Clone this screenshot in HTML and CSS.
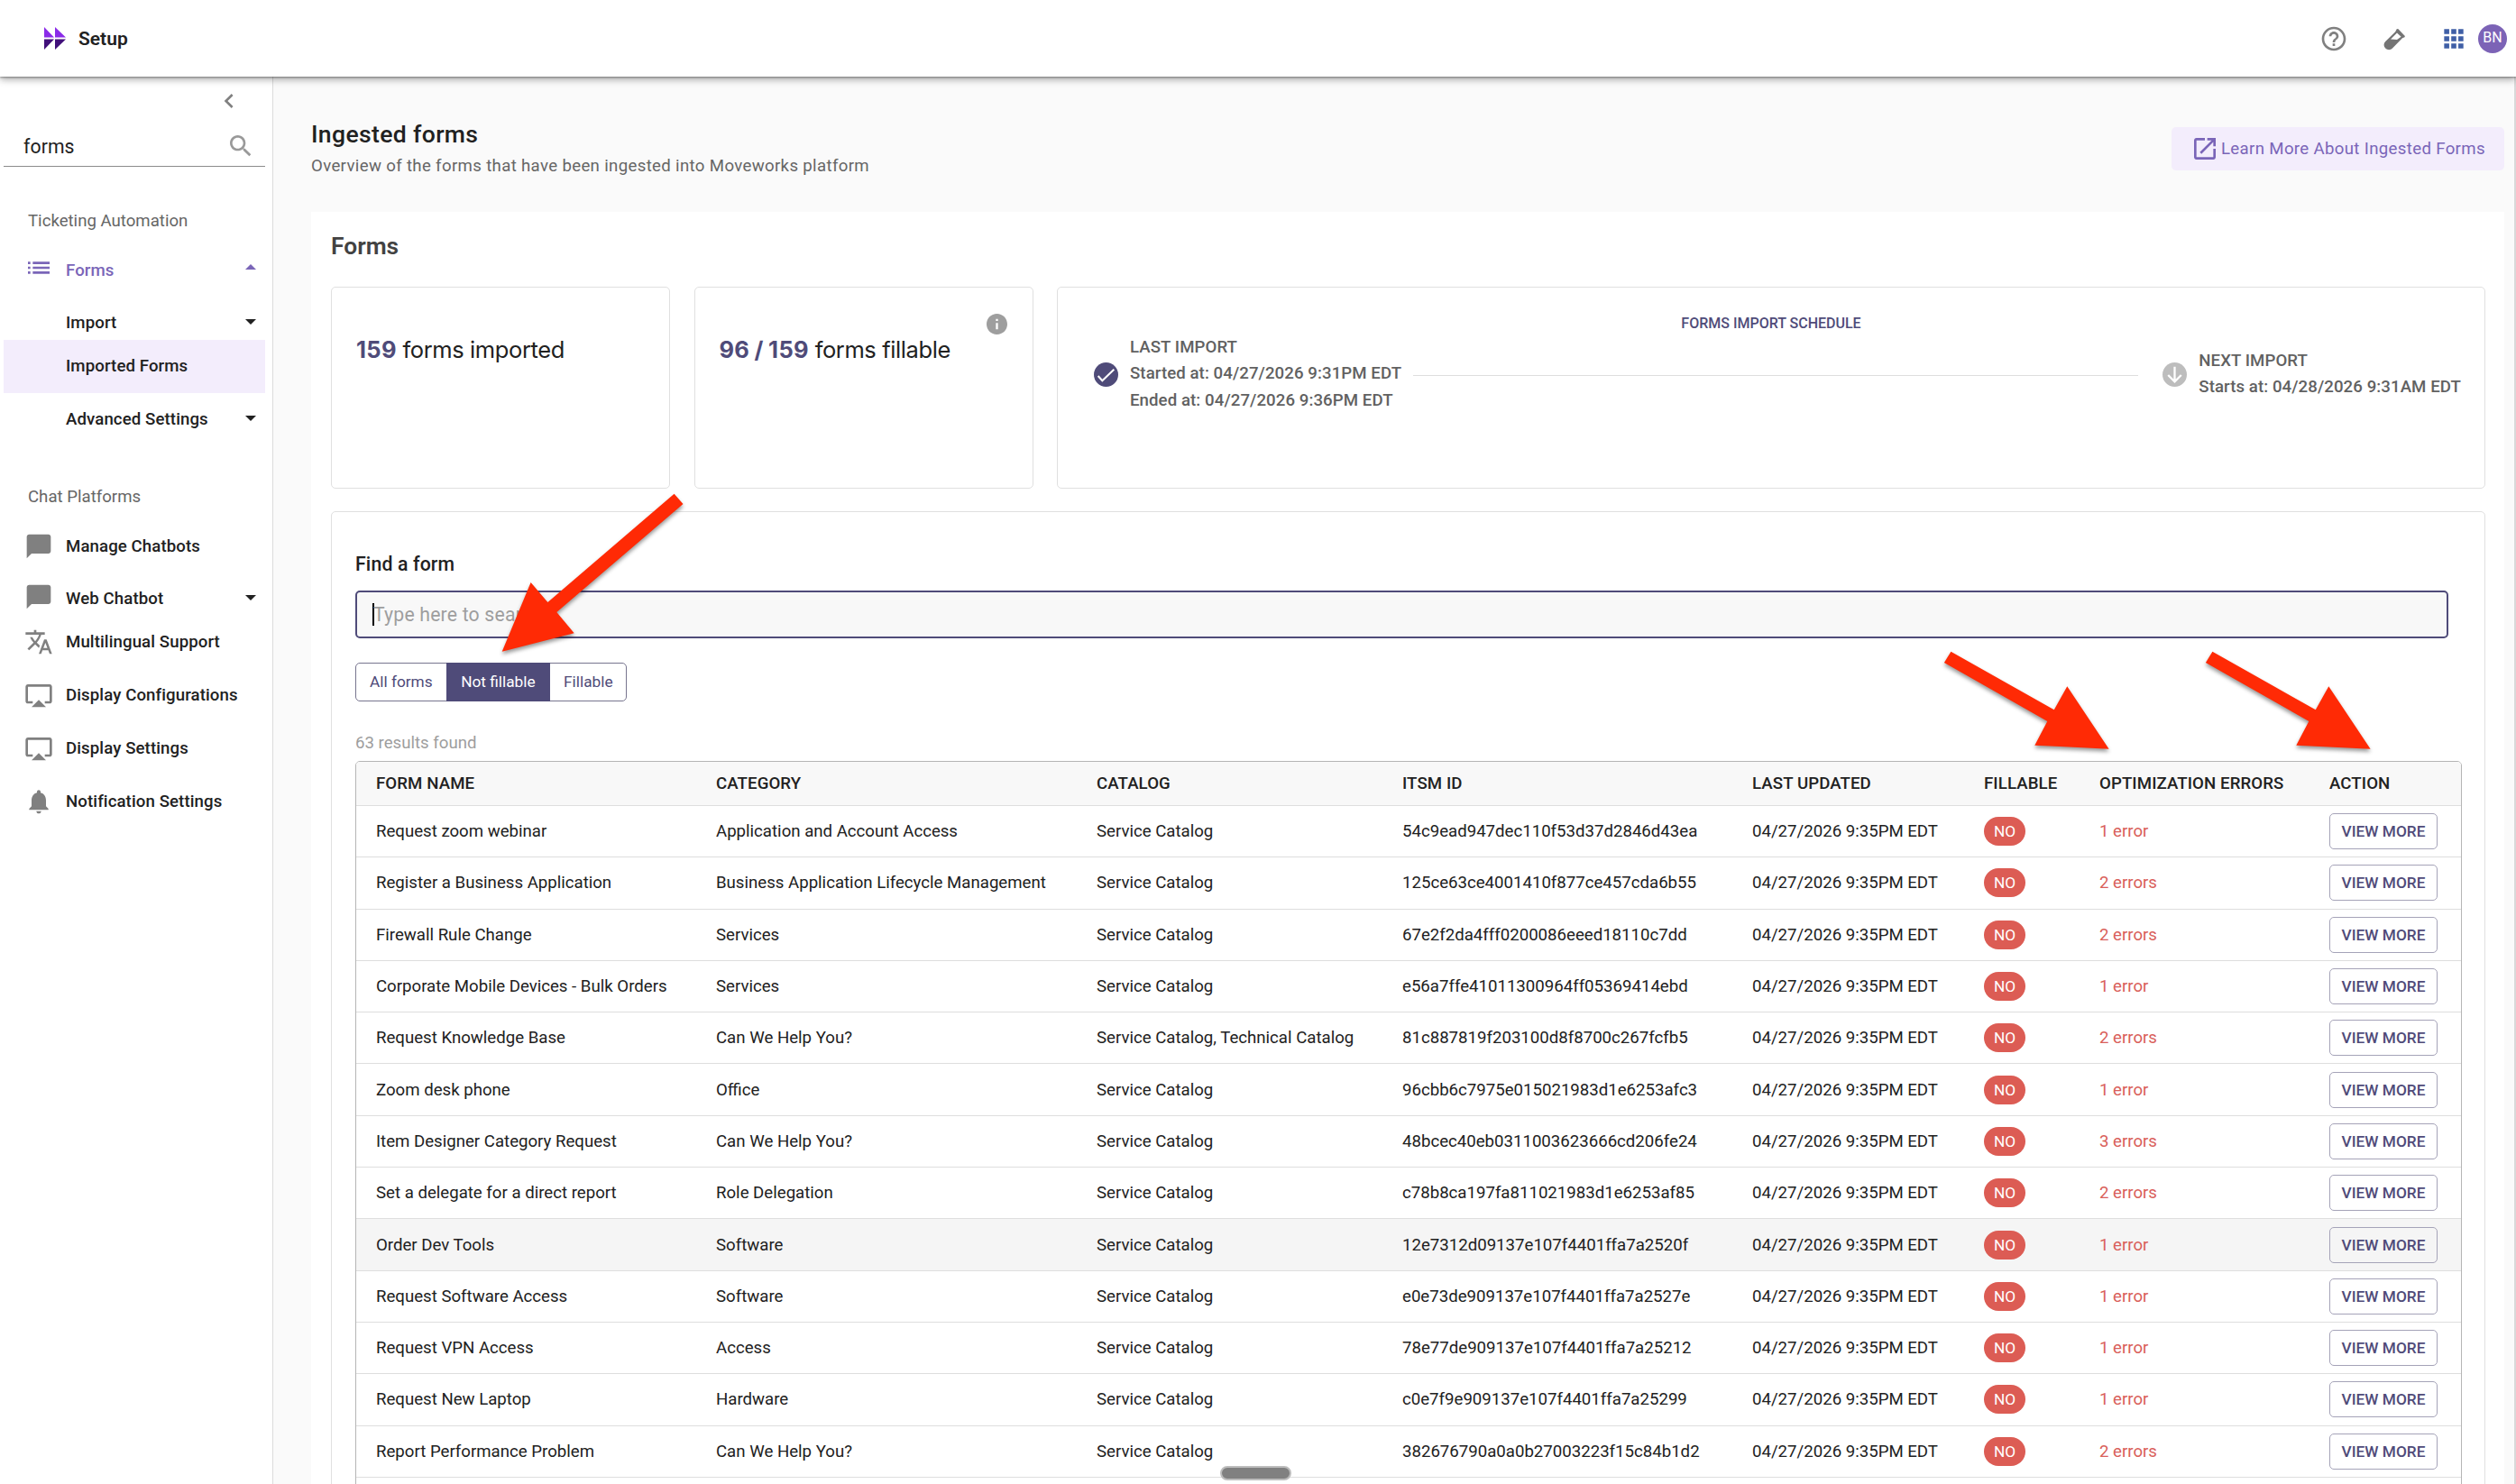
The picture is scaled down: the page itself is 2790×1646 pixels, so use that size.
FILE: index.html
```
<!DOCTYPE html>
<html lang="en">

<head>
    <meta charset="UTF-8">
    <meta name="viewport" content="width=device-width, initial-scale=1.0">
    <title>Setup - Ingested forms</title>
    <link rel="stylesheet" href="styles.css">
</head>

<body>
    <header class="topbar">
        <div class="brand">
            <svg class="logo" viewBox="0 0 24 25">
                <path fill="#8a2be8" d="M0 0l11 11.5H0zM12 0l12 11.5H12z" />
                <path fill="#41107a" d="M0 13.5h11L0 25zM12 13.5h12L12 25z" />
            </svg>
            <span>Setup</span>
        </div>
        <div class="top_icons">
            <svg class="icon help" viewBox="0 0 24 24"><path d="M11 18h2v-2h-2v2zm1-16C6.480 2 2 6.480 2 12s4.480 10 10 10 10-4.480 10-10S17.520 2 12 2zm0 18c-4.410 0-8-3.590-8-8s3.590-8 8-8 8 3.590 8 8-3.590 8-8 8zm0-14c-2.210 0-4 1.790-4 4h2c0-1.100.9-2 2-2s2 .9 2 2c0 2-3 1.750-3 5h2c0-2.250 3-2.500 3-5 0-2.210-1.790-4-4-4z" /></svg>
            <svg class="flask" viewBox="0 0 24 24"><path fill-rule="evenodd" d="M14.700.3L16.200 0l7.700 8-.4 1.300-2.500.9L10 21.600c-2.200 2.200-5.600 2.200-7.800 0s-2.200-5.600 0-7.700L13.200 3.200zM15 4.400l-7 7.200 7 .4 4.600-3.200z" /></svg>
            <svg class="icon apps" viewBox="0 0 24 24"><path d="M4 8h4.200V4H4zM9.900 8h4.200V4H9.900zM15.800 8H20V4h-4.200zM4 14h4.200v-4H4zM9.900 14h4.200v-4H9.900zM15.800 14H20v-4h-4.200zM4 20h4.200v-4H4zM9.900 20h4.200v-4H9.900zM15.800 20H20v-4h-4.200z" /></svg>
            <div class="avatar">BN</div>
        </div>
    </header>

    <div class="layout">
        <nav class="sidebar">
            <div class="collapse">
                <svg class="icon" viewBox="0 0 24 24"><path d="M15.410 7.410L14 6l-6 6 6 6 1.410-1.410L10.830 12z" /></svg>
            </div>
            <div class="side_search">
                <span>forms</span>
                <svg class="icon" viewBox="0 0 24 24"><path d="M15.500 14h-.79l-.28-.27C15.410 12.590 16 11.110 16 9.500 16 5.910 13.090 3 9.500 3S3 5.910 3 9.500 5.910 16 9.500 16c1.610 0 3.090-.59 4.230-1.570l.27.28v.79l5 4.990L20.490 19l-4.990-5zm-6 0C7.010 14 5 11.990 5 9.500S7.010 5 9.500 5 14 7.010 14 9.500 11.990 14 9.500 14z" /></svg>
            </div>

            <div class="side_label">Ticketing Automation</div>
            <a class="item open">
                <svg class="icon" viewBox="0 0 24 24"><path d="M3 13h2v-2H3v2zm0 4h2v-2H3v2zm0-8h2V7H3v2zm4 4h14v-2H7v2zm0 4h14v-2H7v2zM7 7v2h14V7H7z" /></svg>
                <span>Forms</span>
                <i class="caret up"></i>
            </a>
            <a class="item sub parent"><span>Import</span><i class="caret"></i></a>
            <a class="item sub active"><span>Imported Forms</span></a>
            <a class="item sub"><span>Advanced Settings</span><i class="caret"></i></a>

            <div class="side_label chat">Chat Platforms</div>
            <a class="item">
                <svg class="icon" viewBox="0 0 24 24"><path d="M20 2H4c-1.100 0-2 .9-2 2v18l4-4h14c1.100 0 2-.9 2-2V4c0-1.100-.9-2-2-2z" /></svg>
                <span>Manage Chatbots</span>
            </a>
            <a class="item parent">
                <svg class="icon" viewBox="0 0 24 24"><path d="M20 2H4c-1.100 0-2 .9-2 2v18l4-4h14c1.100 0 2-.9 2-2V4c0-1.100-.9-2-2-2z" /></svg>
                <span>Web Chatbot</span>
                <i class="caret"></i>
            </a>
            <a class="item">
                <svg class="icon" viewBox="0 0 24 24"><path d="M12.870 15.070l-2.540-2.510.03-.03c1.740-1.940 2.980-4.170 3.710-6.530H17V4h-7V2H8v2H1v1.990h11.170C11.500 7.920 10.440 9.750 9 11.350 8.070 10.320 7.300 9.190 6.690 8h-2c.73 1.630 1.730 3.170 2.980 4.560l-5.090 5.020L4 19l5-5 3.110 3.110.76-2.040zM18.500 10h-2L12 22h2l1.120-3h4.750L21 22h2l-4.500-12zm-2.620 7l1.620-4.330L19.120 17h-3.240z" /></svg>
                <span>Multilingual Support</span>
            </a>
            <a class="item">
                <svg class="icon" viewBox="0 0 24 24"><path d="M6 22h12l-6-6zM21 3H3c-1.100 0-2 .9-2 2v12c0 1.100.9 2 2 2h4v-2H3V5h18v12h-4v2h4c1.100 0 2-.9 2-2V5c0-1.100-.9-2-2-2z" /></svg>
                <span>Display Configurations</span>
            </a>
            <a class="item">
                <svg class="icon" viewBox="0 0 24 24"><path d="M6 22h12l-6-6zM21 3H3c-1.100 0-2 .9-2 2v12c0 1.100.9 2 2 2h4v-2H3V5h18v12h-4v2h4c1.100 0 2-.9 2-2V5c0-1.100-.9-2-2-2z" /></svg>
                <span>Display Settings</span>
            </a>
            <a class="item">
                <svg class="icon" viewBox="0 0 24 24"><path d="M12 22c1.100 0 2-.9 2-2h-4c0 1.100.89 2 2 2zm6-6v-5c0-3.070-1.640-5.640-4.500-6.320V4c0-.83-.67-1.500-1.500-1.500s-1.500.67-1.500 1.500v.68C7.630 5.360 6 7.920 6 11v5l-2 2v1h16v-1l-2-2z" /></svg>
                <span>Notification Settings</span>
            </a>
        </nav>

        <main class="content">
            <div class="page_head">
                <div>
                    <h1>Ingested forms</h1>
                    <p>Overview of the forms that have been ingested into Moveworks platform</p>
                </div>
                <a class="learn_btn">
                    <svg class="icon" viewBox="0 0 24 24"><path d="M19 19H5V5h7V3H5c-1.110 0-2 .9-2 2v14c0 1.100.89 2 2 2h14c1.100 0 2-.9 2-2v-7h-2v7zM14 3v2h3.590l-9.830 9.830 1.410 1.410L19 6.410V10h2V3h-7z" /></svg>
                    <span>Learn More About Ingested Forms</span>
                </a>
            </div>

            <section class="panel">
                <h2>Forms</h2>
                <div class="cards">
                    <div class="card stat"><b>159</b> forms imported</div>
                    <div class="card stat"><b>96 / 159</b> forms fillable
                        <svg class="info" viewBox="2 2 20 20"><path d="M12 2C6.480 2 2 6.480 2 12s4.480 10 10 10 10-4.480 10-10S17.520 2 12 2zm1 15h-2v-6h2v6zm0-8h-2V7h2v2z" /></svg>
                    </div>
                    <div class="card schedule">
                        <div class="schedule_title">FORMS IMPORT SCHEDULE</div>
                        <div class="steps">
                            <svg class="step_icon" viewBox="0 0 26 26"><circle cx="13" cy="13" r="13" fill="#4f4b79" /><path d="M4.500 14.500l4.500 5L21.500 7.500" fill="none" stroke="#fff" stroke-width="2" /></svg>
                            <div class="step_text">
                                <p>LAST IMPORT</p>
                                <p>Started at: 04/27/2026 9:31PM EDT</p>
                                <p>Ended at: 04/27/2026 9:36PM EDT</p>
                            </div>
                            <div class="line"></div>
                            <svg class="step_icon" viewBox="0 0 26 26"><circle cx="13" cy="13" r="13" fill="#bdbdbd" /><path d="M13 4.500v16M6 13.500l7 7 7-7" fill="none" stroke="#fff" stroke-width="2.200" /></svg>
                            <div class="step_text">
                                <p>NEXT IMPORT</p>
                                <p>Starts at: 04/28/2026 9:31AM EDT</p>
                            </div>
                        </div>
                    </div>
                </div>

                <div class="card finder">
                    <h3>Find a form</h3>
                    <div class="search_box"><i class="cursor"></i><span>Type here to search</span></div>
                    <div class="tabs">
                        <span>All forms</span>
                        <span class="on">Not fillable</span>
                        <span>Fillable</span>
                    </div>
                    <div class="count">63 results found</div>

                    <div class="table_wrap">
                        <table>
                            <colgroup>
                                <col class="c_name"><col class="c_cat"><col class="c_catalog"><col class="c_id">
                                <col class="c_date"><col class="c_fill"><col class="c_err"><col class="c_act">
                            </colgroup>
                            <thead>
                                <tr><th>FORM NAME</th><th>CATEGORY</th><th>CATALOG</th><th>ITSM ID</th><th>LAST UPDATED</th><th>FILLABLE</th><th>OPTIMIZATION ERRORS</th><th>ACTION</th></tr>
                            </thead>
                            <tbody>
                                <tr><td>Request zoom webinar</td><td>Application and Account Access</td><td>Service Catalog</td><td>54c9ead947dec110f53d37d2846d43ea</td><td>04/27/2026 9:35PM EDT</td><td><span class="no">NO</span></td><td class="err">1 error</td><td><a class="more">VIEW MORE</a></td></tr>
                                <tr><td>Register a Business Application</td><td>Business Application Lifecycle Management</td><td>Service Catalog</td><td>125ce63ce4001410f877ce457cda6b55</td><td>04/27/2026 9:35PM EDT</td><td><span class="no">NO</span></td><td class="err">2 errors</td><td><a class="more">VIEW MORE</a></td></tr>
                                <tr><td>Firewall Rule Change</td><td>Services</td><td>Service Catalog</td><td>67e2f2da4fff0200086eeed18110c7dd</td><td>04/27/2026 9:35PM EDT</td><td><span class="no">NO</span></td><td class="err">2 errors</td><td><a class="more">VIEW MORE</a></td></tr>
                                <tr><td>Corporate Mobile Devices - Bulk Orders</td><td>Services</td><td>Service Catalog</td><td>e56a7ffe41011300964ff05369414ebd</td><td>04/27/2026 9:35PM EDT</td><td><span class="no">NO</span></td><td class="err">1 error</td><td><a class="more">VIEW MORE</a></td></tr>
                                <tr><td>Request Knowledge Base</td><td>Can We Help You?</td><td>Service Catalog, Technical Catalog</td><td>81c887819f203100d8f8700c267fcfb5</td><td>04/27/2026 9:35PM EDT</td><td><span class="no">NO</span></td><td class="err">2 errors</td><td><a class="more">VIEW MORE</a></td></tr>
                                <tr><td>Zoom desk phone</td><td>Office</td><td>Service Catalog</td><td>96cbb6c7975e015021983d1e6253afc3</td><td>04/27/2026 9:35PM EDT</td><td><span class="no">NO</span></td><td class="err">1 error</td><td><a class="more">VIEW MORE</a></td></tr>
                                <tr><td>Item Designer Category Request</td><td>Can We Help You?</td><td>Service Catalog</td><td>48bcec40eb0311003623666cd206fe24</td><td>04/27/2026 9:35PM EDT</td><td><span class="no">NO</span></td><td class="err">3 errors</td><td><a class="more">VIEW MORE</a></td></tr>
                                <tr><td>Set a delegate for a direct report</td><td>Role Delegation</td><td>Service Catalog</td><td>c78b8ca197fa811021983d1e6253af85</td><td>04/27/2026 9:35PM EDT</td><td><span class="no">NO</span></td><td class="err">2 errors</td><td><a class="more">VIEW MORE</a></td></tr>
                                <tr class="hover"><td>Order Dev Tools</td><td>Software</td><td>Service Catalog</td><td>12e7312d09137e107f4401ffa7a2520f</td><td>04/27/2026 9:35PM EDT</td><td><span class="no">NO</span></td><td class="err">1 error</td><td><a class="more">VIEW MORE</a></td></tr>
                                <tr><td>Request Software Access</td><td>Software</td><td>Service Catalog</td><td>e0e73de909137e107f4401ffa7a2527e</td><td>04/27/2026 9:35PM EDT</td><td><span class="no">NO</span></td><td class="err">1 error</td><td><a class="more">VIEW MORE</a></td></tr>
                                <tr><td>Request VPN Access</td><td>Access</td><td>Service Catalog</td><td>78e77de909137e107f4401ffa7a25212</td><td>04/27/2026 9:35PM EDT</td><td><span class="no">NO</span></td><td class="err">1 error</td><td><a class="more">VIEW MORE</a></td></tr>
                                <tr><td>Request New Laptop</td><td>Hardware</td><td>Service Catalog</td><td>c0e7f9e909137e107f4401ffa7a25299</td><td>04/27/2026 9:35PM EDT</td><td><span class="no">NO</span></td><td class="err">1 error</td><td><a class="more">VIEW MORE</a></td></tr>
                                <tr><td>Report Performance Problem</td><td>Can We Help You?</td><td>Service Catalog</td><td>382676790a0a0b27003223f15c84b1d2</td><td>04/27/2026 9:35PM EDT</td><td><span class="no">NO</span></td><td class="err">2 errors</td><td><a class="more">VIEW MORE</a></td></tr>
                            </tbody>
                        </table>
                    </div>
                </div>
            </section>
        </main>
    </div>

    <div class="scroll_thumb"></div>

    <!-- callout arrows -->
    <svg class="arrows" viewBox="0 0 2790 1646">
        <path d="M747.600 547.700L757.500 559 617.300 679 636.700 702.300 556.700 722.700 588.600 646 607.400 668z" />
        <path d="M2163.400 722.700L2277.800 787.300 2292.300 761.300 2338.600 830.700 2256.300 826.700 2270.300 800 2155.900 735z" />
        <path d="M2453.400 722.700L2567.800 787.300 2582.300 761.300 2628.600 830.700 2546.300 826.700 2560.300 800 2445.900 735z" />
    </svg>
</body>

</html>
```

FILE: styles.css
```
* {
    margin: 0;
    padding: 0;
    box-sizing: border-box;
}

body {
    width: 2790px;
    height: 1646px;
    overflow: hidden;
    position: relative;
    background-color: #fafafa;
    font-family: Roboto, "Liberation Sans", sans-serif;
    font-size: 18.64px;
    color: #212121;
}

.icon {
    width: 32px;
    height: 32px;
    flex-shrink: 0;
    fill: #808080;
}

/* top bar */
.topbar {
    position: relative;
    z-index: 2;
    height: 85px;
    padding: 0 10px 0 49px;
    display: flex;
    align-items: center;
    justify-content: space-between;
    background-color: #fff;
    box-shadow: 0 1px 2px rgba(0, 0, 0, 0.35), 0 3px 8px rgba(0, 0, 0, 0.35);
}

.brand {
    display: flex;
    align-items: center;
    gap: 14px;
    font-size: 21px;
    font-weight: 600;
}

.logo {
    width: 24px;
    height: 25px;
}

.top_icons {
    display: flex;
    align-items: center;
}

.top_icons .help {
    margin-right: 39px;
}

.flask {
    width: 24px;
    height: 24px;
    fill: #757575;
    margin: 2px 38px 0 0;
}

.top_icons .apps {
    margin-right: 11px;
    fill: #3f5fa6;
}

.avatar {
    width: 32px;
    height: 32px;
    line-height: 30px;
    border-radius: 50%;
    background-color: #7c63b6;
    color: #fff;
    font-size: 16px;
    text-align: center;
}

.layout {
    display: flex;
    height: 1561px;
}

/* sidebar */
.sidebar {
    width: 303px;
    flex-shrink: 0;
    border-right: 1px solid #dcdcdc;
    background-color: #fff;
    padding: 11px 8px 0 4px;
}

.collapse {
    height: 32px;
    padding-left: 234px;
}

.side_search {
    height: 57px;
    padding: 12px 11px 0 22px;
    display: flex;
    align-items: center;
    justify-content: space-between;
    border-bottom: 1px solid #8c8c8c;
    font-size: 21.2px;
    letter-spacing: 0.1px;
}

.side_search .icon {
    fill: #999;
}

.side_label {
    margin-top: 44px;
    padding-left: 27px;
    height: 41px;
    line-height: 32px;
    color: #666;
}

.side_label.chat {
    margin-top: 41px;
}

.item {
    display: flex;
    align-items: center;
    height: 58.7px;
    padding: 0 10px 0 23px;
    font-weight: 500;
    letter-spacing: 0.1px;
}

.item span {
    flex: 1;
    padding-left: 14px;
}

.item.sub span {
    padding-left: 46px;
}

.item.parent {
    margin-bottom: -10.5px;
}

.item.parent .icon,
.item.open .icon {
    margin-bottom: 5px;
}

.item.open {
    color: #7a65b8;
}

.item.open span {
    padding-top: 1px;
}

.item.open .icon {
    fill: #7a65b8;
}

.item.active {
    background-color: #f3edfc;
}

.caret {
    border: 6.7px solid transparent;
    border-top-color: #212121;
    border-bottom: 0;
    margin-bottom: 2px;
}

.caret.up {
    border: 6.7px solid transparent;
    border-bottom-color: #7a65b8;
    border-top: 0;
    margin-bottom: 6px;
}

/* main area */
.content {
    flex: 1;
    height: 1561px;
    overflow: hidden;
    padding: 46px 11px 0 42px;
    border-right: 2px solid #d9d9d9;
}

.page_head {
    display: flex;
    justify-content: space-between;
    height: 104px;
}

.page_head h1 {
    font-size: 26.56px;
    font-weight: 500;
    line-height: 35px;
    letter-spacing: 0.35px;
}

.page_head p {
    line-height: 37px;
    color: #666;
    letter-spacing: 0.34px;
}

.learn_btn {
    display: flex;
    align-items: center;
    margin-top: 10px;
    width: 369px;
    height: 48px;
    padding-left: 21px;
    border-radius: 5px;
    background-color: #f3edfc;
    color: #7a65b8;
    letter-spacing: 0.34px;
}

.learn_btn .icon {
    fill: #7a65b8;
    margin-right: 2px;
}

.panel {
    background-color: #fff;
    padding: 18px 21px 0 22px;
    height: 1500px;
}

.panel h2 {
    font-size: 26.4px;
    font-weight: 600;
    line-height: 40px;
    color: #424242;
    height: 65px;
}

.card {
    border: 1px solid #e0e0e0;
    border-radius: 5px;
}

.cards {
    display: flex;
    gap: 26.5px;
    height: 224px;
}

.stat {
    position: relative;
    width: 376px;
    padding: 50px 0 0 27px;
    font-family: Inter, Roboto, sans-serif;
    font-size: 25.5px;
    line-height: 38px;
    letter-spacing: -0.4px;
}

.stat b {
    color: #4f4b79;
    font-weight: 700;
    letter-spacing: 0.3px;
    word-spacing: -1px;
}

.info {
    position: absolute;
    top: 29px;
    right: 28px;
    width: 23px;
    height: 23px;
    fill: #9e9e9e;
}

.schedule {
    flex: 1;
    padding: 30px 26px 0 40px;
}

.schedule_title {
    text-align: center;
    font-size: 16px;
    font-weight: 500;
    line-height: 20px;
    color: #4f4b79;
    padding-right: 14px;
}

.steps {
    display: flex;
    align-items: center;
    height: 92px;
    font-weight: 500;
    color: #616161;
    letter-spacing: 0.08px;
}

.step_icon {
    width: 27px;
    height: 27px;
    margin-right: 13px;
}

.step_text p {
    line-height: 29.5px;
}

.line {
    flex: 1;
    height: 1px;
    background-color: #dedede;
    margin: 2px 27px 0 13px;
}

/* finder */
.finder {
    margin-top: 25px;
    height: 1400px;
    padding: 41px 25px 0 26px;
}

.finder h3 {
    font-size: 21.25px;
    font-weight: 500;
    line-height: 33px;
    height: 46px;
    letter-spacing: 0.15px;
}

.search_box {
    display: flex;
    align-items: center;
    width: 2321px;
    height: 53px;
    padding-left: 17px;
    border: 2px solid #4f4b79;
    border-radius: 5px;
    background-color: #f8f8f8;
    color: #9e9e9e;
    font-size: 21.2px;
    letter-spacing: 0.2px;
}

.search_box span {
    margin-left: -1px;
}

.cursor {
    width: 2px;
    height: 25px;
    background-color: #000;
}

.tabs {
    display: flex;
    width: 301px;
    height: 43px;
    margin-top: 27px;
    border: 1px solid #77758f;
    border-radius: 5px;
    font-size: 17.26px;
    line-height: 41px;
    color: #4f4b79;
}

.tabs span {
    padding: 0 15px;
    white-space: nowrap;
}

.tabs .on {
    margin: -1px 0;
    padding: 0 16.5px;
    line-height: 43px;
    background-color: #4f4b79;
    color: #fff;
}

.count {
    height: 66px;
    padding-top: 30px;
    line-height: 32px;
    color: #9e9e9e;
}

.table_wrap {
    width: 2336px;
    height: 900px;
    border: 1px solid #b5b5b5;
    border-radius: 5px;
    overflow: hidden;
}

table {
    width: 2334px;
    table-layout: fixed;
    border-collapse: separate;
    border-spacing: 0;
}

th,
td {
    text-align: left;
    vertical-align: middle;
    white-space: nowrap;
    border-bottom: 1px solid #dedede;
}

th {
    height: 49px;
    font-weight: 500;
    background-color: #f8f8f8;
    letter-spacing: 0.1px;
}

td {
    height: 57.3px;
}

th:first-child,
td:first-child {
    padding-left: 22px;
}

.c_name { width: 399px; }
.c_cat { width: 422px; }
.c_catalog { width: 339px; }
.c_id { width: 388px; }
.c_date { width: 257px; }
.c_fill { width: 128px; }
.c_err { width: 255px; }
.c_act { width: 146px; }

.hover {
    background-color: #f5f5f5;
}

.no {
    display: block;
    width: 46px;
    height: 32px;
    line-height: 32px;
    border-radius: 16px;
    background-color: #dc5c54;
    color: #fff;
    font-size: 17.26px;
    text-align: center;
}

.err {
    color: #d9605a;
}

.more {
    display: block;
    width: 120px;
    height: 40px;
    line-height: 39px;
    border: 1px solid #a5a3b8;
    border-radius: 5px;
    color: #4f4b79;
    font-size: 17.26px;
    font-weight: 500;
    text-align: center;
}

.scroll_thumb {
    position: absolute;
    left: 1353px;
    top: 1626px;
    width: 79px;
    height: 16px;
    border: 2px solid #bdbdbd;
    border-radius: 8px;
    background-color: #808080;
    z-index: 3;
}

.arrows {
    position: absolute;
    left: 0;
    top: 0;
    width: 2790px;
    height: 1646px;
    fill: #ff2a05;
    filter: drop-shadow(0 3px 2px rgba(0, 0, 0, 0.4));
    z-index: 3;
}
```
